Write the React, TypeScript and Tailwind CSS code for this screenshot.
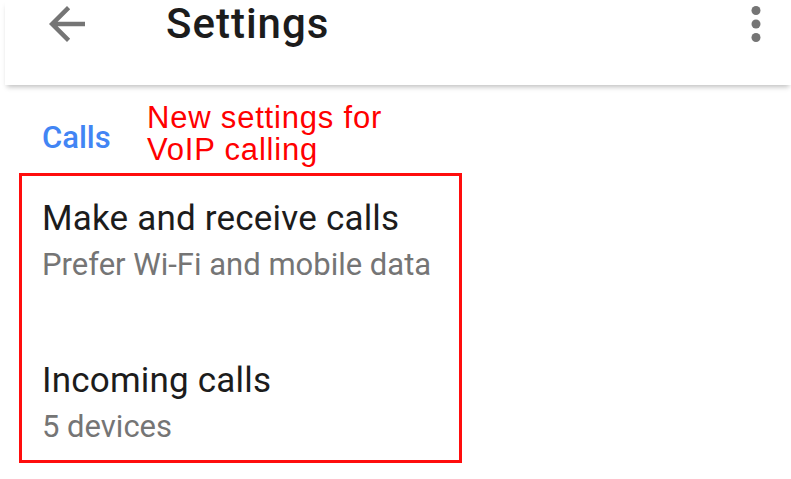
import React from 'react';

const roboto = { fontFamily: 'Roboto, "Noto Sans", sans-serif' };

const BackArrow: React.FC = () => (
  <svg width="54" height="54" viewBox="0 0 24 24" fill="#757575">
    <path d="M20 11H7.83l5.59-5.59L12 4l-8 8 8 8 1.41-1.41L7.83 13H20v-2z" />
  </svg>
);

const MoreVert: React.FC = () => (
  <svg width="54" height="54" viewBox="0 0 24 24" fill="#757575">
    <circle cx="12" cy="6" r="2" />
    <circle cx="12" cy="12" r="2" />
    <circle cx="12" cy="18" r="2" />
  </svg>
);

const SettingItem: React.FC<{ title: string; summary: string; className?: string }> = ({ title, summary, className }) => (
  <div className={className}>
    <div className="text-[35px] leading-[40px] tracking-[0.2px] text-[#1c1c1c]">{title}</div>
    <div className="mt-[6px] text-[31px] leading-[40px] text-[#757575]">{summary}</div>
  </div>
);

export default function App() {
  return (
    <div className="w-[791px] h-[479px] overflow-hidden bg-white" style={roboto}>
      {/* app bar */}
      <div className="ml-[5px] h-[85px] bg-white shadow-[0_4px_5px_-2px_rgba(0,0,0,0.25)] relative">
        <div className="flex h-[47px] items-center">
          <div className="ml-[35px] w-[54px] h-[54px] shrink-0">
            <BackArrow />
          </div>
          <div className="ml-[72px] text-[42px] leading-none tracking-[1px] font-medium text-[#1c1c1c]">Settings</div>
          <div className="ml-auto mr-[8px] w-[54px] h-[54px] shrink-0">
            <MoreVert />
          </div>
        </div>
      </div>

      {/* category header with annotation */}
      <div className="mt-[17px] flex items-start pl-[42px]">
        <div className="mt-[18px] w-[105px] text-[31px] leading-[36px] font-medium text-[#4285f4]">Calls</div>
        <div
          className="text-[31px] leading-[32px] tracking-[0.8px] text-[#ff0000]"
          style={{ fontFamily: '"Liberation Sans", Arial, sans-serif' }}
        >
          New settings for
          <br />
          VoIP calling
        </div>
      </div>

      {/* highlighted preferences */}
      <div className="mt-[7px] ml-[19px] w-[443px] h-[290px] border-[3px] border-[#ff0d0d] pl-[20px] pt-[23px]">
        <SettingItem title="Make and receive calls" summary="Prefer Wi-Fi and mobile data" />
        <SettingItem className="mt-[76px]" title="Incoming calls" summary="5 devices" />
      </div>
    </div>
  );
}
